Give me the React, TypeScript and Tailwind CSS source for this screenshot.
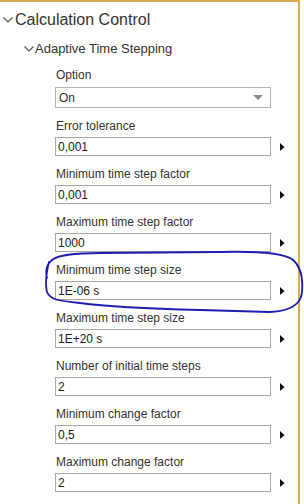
import React from "react";

const fields = [
  { label: "Error tolerance", value: "0,001" },
  { label: "Minimum time step factor", value: "0,001" },
  { label: "Maximum time step factor", value: "1000" },
  { label: "Minimum time step size", value: "1E-06 s" },
  { label: "Maximum time step size", value: "1E+20 s" },
  { label: "Number of initial time steps", value: "2" },
  { label: "Minimum change factor", value: "0,5" },
  { label: "Maximum change factor", value: "2" },
];

const Chevron = () => (
  <svg width="10" height="6" viewBox="0 0 10 6" className="shrink-0">
    <path d="M0.5 0.5 L5 5 L9.5 0.5" fill="none" stroke="#555" strokeWidth="1.2" />
  </svg>
);

const App = () => {
  return (
    <div className="relative w-[304px] h-[504px] bg-white overflow-hidden font-['Liberation_Sans',Arial,sans-serif]">
      <div className="w-[300px] h-full border-t-2 border-r-2 border-[#dcad4e] bg-[#fffffe]">
        {/* Section header */}
        <div className="h-[36px] flex items-center pl-[3px] gap-[2px] text-[#333]">
          <Chevron />
          <span className="text-[16px]">Calculation Control</span>
        </div>

        {/* Subsection */}
        <div className="h-[22px] flex items-center pl-[24px] gap-[1px] text-[#333]">
          <Chevron />
          <span className="text-[13px]">Adaptive Time Stepping</span>
        </div>

        <div className="pl-[55px] mt-[8px] text-[#333]">
          {/* Option select */}
          <div className="text-[12px] leading-[14px] pl-[1px]">Option</div>
          <div className="mt-[5px] w-[216px] h-[21px] border border-[#b4b4b4] flex items-center justify-between pl-[3px] pr-[7px] text-[12px]">
            <span>On</span>
            <svg width="10" height="6" viewBox="0 0 10 6">
              <path d="M0 0 L10 0 L5 5 Z" fill="#8a8a8a" />
            </svg>
          </div>

          {fields.map((f) => (
            <div key={f.label} className="mt-[11px]">
              <div className="text-[12px] leading-[14px] pl-[1px]">{f.label}</div>
              <div className="mt-[4px] flex items-center">
                <div className="w-[216px] h-[19px] border border-[#a8a8a8] flex items-center pl-[2px] text-[12px] text-[#222]">
                  {f.value}
                </div>
                <svg width="5" height="8" viewBox="0 0 5 8" className="ml-[9px]">
                  <path d="M0 0 L4.5 4 L0 8 Z" fill="#111" />
                </svg>
              </div>
            </div>
          ))}
        </div>
      </div>

      {/* Hand-drawn highlight around the minimum time step size */}
      <svg
        className="absolute left-0 top-0 pointer-events-none"
        width="304"
        height="504"
        viewBox="0 0 304 504"
      >
        <path
          d="M47 278 C45 270, 47 264, 52 260 C58 255, 75 253, 100 253 L220 252 C255 251, 282 253, 292 259 C301 266, 303 280, 302 292 C301 304, 292 311, 270 312 L200 310 C160 309, 110 307, 80 303 C60 301, 50 300, 47 292 C45 284, 46 274, 49 262"
          fill="none"
          stroke="#1d1db0"
          strokeWidth="1.8"
          strokeLinecap="round"
        />
      </svg>
    </div>
  );
};

export default App;
